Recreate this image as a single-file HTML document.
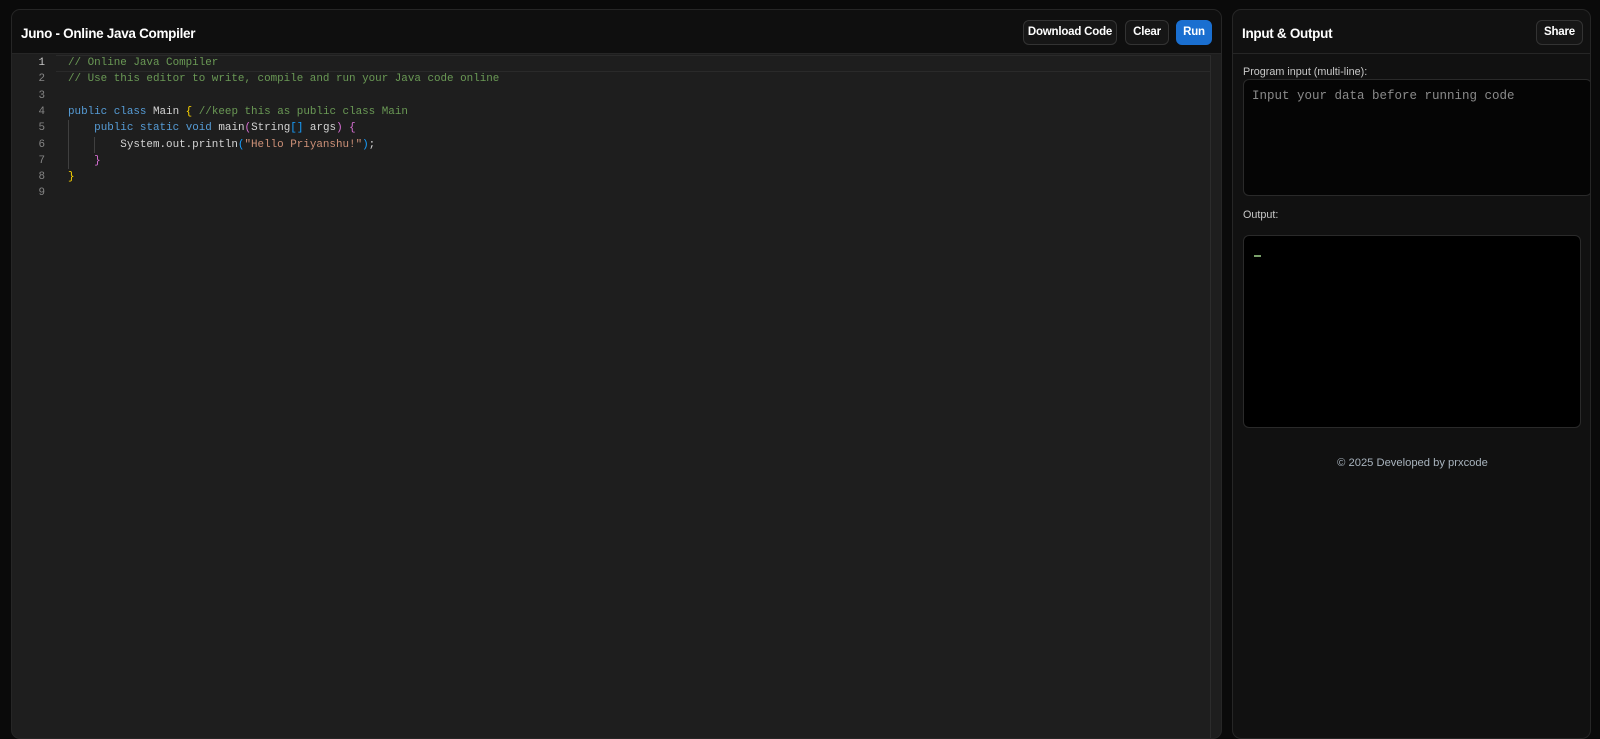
<!DOCTYPE html>
<html><head><meta charset="utf-8"><style>
*{box-sizing:border-box;margin:0;padding:0}
body{width:1600px;height:723px;background:#0a0a0a;overflow:hidden;font-family:"Liberation Sans",sans-serif;position:relative}
.lp{position:absolute;left:11px;top:9px;width:1211px;height:730px;background:#1e1e1e;border:1px solid #262626;border-radius:9px;overflow:hidden}
.lh{height:44px;background:#0f0f0f;border-bottom:1px solid #262626;position:relative}
.title{position:absolute;left:9px;top:16px;color:#fff;font-weight:bold;font-size:13.5px;letter-spacing:-0.3px}
.btn{position:absolute;top:10px;height:25px;border:1px solid #333;border-radius:6px;background:#161616;color:#fff;font-size:11.5px;font-weight:bold;line-height:23px;text-align:center;letter-spacing:-0.2px}
.rp{position:absolute;left:1232px;top:9px;width:359px;height:730px;background:#111;border:1px solid #262626;border-radius:9px;overflow:hidden}
.rh{height:44px;border-bottom:1px solid #262626;position:relative}
.code{position:absolute;left:0;top:45px;font-family:"Liberation Mono",monospace;font-size:10.9px;line-height:16.3px;color:#d4d4d4;white-space:pre}
.ln{position:absolute;left:0;width:33px;text-align:right;color:#858585}
.cl{position:absolute;left:56px}
.c{color:#6a9955}.k{color:#569cd6}.y{color:#ffd700}.p{color:#da70d6}.b{color:#179fff}.s{color:#ce9178}
</style></head><body>
<div class="lp">
 <div class="lh">
  <div class="title">Juno - Online Java Compiler</div>
  <div class="btn" style="left:1011px;width:94px">Download Code</div>
  <div class="btn" style="left:1113px;width:44px">Clear</div>
  <div class="btn" style="left:1164px;width:36px;background:#1a6fd0;border-color:#1a6fd0">Run</div>
 </div>
 <div style="position:absolute;left:44px;top:45px;width:1154px;height:17px;border-top:1px solid #2a2a2a;border-bottom:1px solid #2a2a2a"></div>
 <div style="position:absolute;left:1198px;top:45px;width:1px;height:700px;background:#2c2c2c"></div>
 <div style="position:absolute;left:56px;top:110px;width:1px;height:49px;background:#404040"></div>
 <div style="position:absolute;left:82px;top:127px;width:1px;height:16px;background:#404040"></div>
 <div class="code">
  <div class="ln" style="top:0;color:#c6c6c6">1</div><div class="ln" style="top:16.3px">2</div><div class="ln" style="top:32.6px">3</div><div class="ln" style="top:48.9px">4</div><div class="ln" style="top:65.2px">5</div><div class="ln" style="top:81.5px">6</div><div class="ln" style="top:97.8px">7</div><div class="ln" style="top:114.1px">8</div><div class="ln" style="top:130.4px">9</div>
  <div class="cl" style="top:0"><span class="c">// Online Java Compiler</span></div>
  <div class="cl" style="top:16.3px"><span class="c">// Use this editor to write, compile and run your Java code online</span></div>
  <div class="cl" style="top:48.9px"><span class="k">public</span> <span class="k">class</span> Main <span class="y">{</span> <span class="c">//keep this as public class Main</span></div>
  <div class="cl" style="top:65.2px">    <span class="k">public</span> <span class="k">static</span> <span class="k">void</span> main<span class="p">(</span>String<span class="b">[]</span> args<span class="p">)</span> <span class="p">{</span></div>
  <div class="cl" style="top:81.5px">        System.out.println<span class="b">(</span><span class="s">"Hello Priyanshu!"</span><span class="b">)</span>;</div>
  <div class="cl" style="top:97.8px">    <span class="p">}</span></div>
  <div class="cl" style="top:114.1px"><span class="y">}</span></div>
 </div>
</div>
<div class="rp">
 <div class="rh">
  <div class="title" style="left:9px">Input &amp; Output</div>
  <div class="btn" style="left:303px;width:47px">Share</div>
 </div>
 <div style="position:absolute;left:10px;top:56px;color:#c8c8c8;font-size:10.8px">Program input (multi-line):</div>
 <div style="position:absolute;left:10px;top:69px;width:349px;height:117px;background:#050505;border:1px solid #2a2a2a;border-radius:6px;font-family:'Liberation Mono',monospace;font-size:12.5px;color:#8a8a8a;padding:9px 8px">Input your data before running code</div>
 <div style="position:absolute;left:10px;top:199px;color:#c8c8c8;font-size:10.8px">Output:</div>
 <div style="position:absolute;left:10px;top:225px;width:338px;height:193px;background:#000;border:1px solid #2a2a2a;border-radius:6px"><div style="position:absolute;left:10px;top:19px;width:7px;height:1.5px;background:#7aa06a"></div></div>
 <div style="position:absolute;left:0;width:359px;top:447px;text-align:center;color:#a8b3bd;font-size:11.2px">© 2025 Developed by prxcode</div>
</div>
</body></html>
